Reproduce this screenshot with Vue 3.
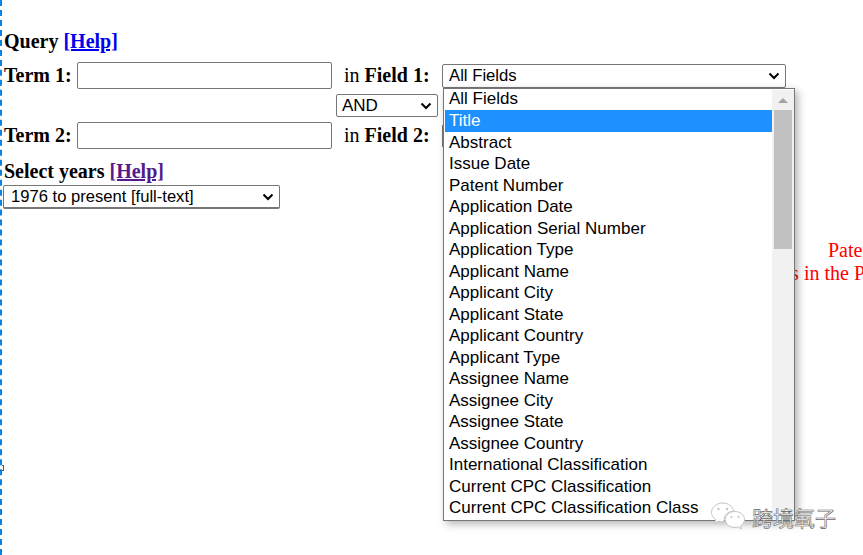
<script setup>
const fieldOptions = [
  'All Fields',
  'Title',
  'Abstract',
  'Issue Date',
  'Patent Number',
  'Application Date',
  'Application Serial Number',
  'Application Type',
  'Applicant Name',
  'Applicant City',
  'Applicant State',
  'Applicant Country',
  'Applicant Type',
  'Assignee Name',
  'Assignee City',
  'Assignee State',
  'Assignee Country',
  'International Classification',
  'Current CPC Classification',
  'Current CPC Classification Class'
]
</script>

<template>
  <div class="page">
    <form class="query" @submit.prevent>
      <h4 class="heading">Query <a class="help" href="#">[Help]</a></h4>

      <div class="terms">
        <label class="term-label">Term 1:</label>
        <input class="term-input" type="text" />
        <span class="field-label">in <b>Field 1:</b></span>
        <div class="field-wrap">
          <select class="field-select">
            <option>All Fields</option>
          </select>
          <div class="dropdown">
            <ul class="options">
              <li
                v-for="option in fieldOptions"
                :key="option"
                :class="{ active: option === 'Title' }"
              >
                {{ option }}
              </li>
            </ul>
            <div class="scrollbar">
              <span class="arrow"></span>
              <span class="thumb"></span>
            </div>
          </div>
        </div>

        <select class="op-select">
          <option>AND</option>
        </select>

        <label class="term-label term-label-2">Term 2:</label>
        <input class="term-input term-input-2" type="text" />
        <span class="field-label">in <b>Field 2:</b></span>
        <select class="field-select field-select-2">
          <option>All Fields</option>
        </select>
      </div>

      <h4 class="heading years-heading">Select years <a class="help visited" href="#">[Help]</a></h4>
      <select class="years-select">
        <option>1976 to present [full-text]</option>
      </select>
    </form>

    <div class="notice">
      <p>Patents</p>
      <p class="notice-second">Results in the Patent</p>
    </div>

    <span class="resize-handle"></span>

    <div class="watermark">
      <svg width="36" height="30" viewBox="0 0 36 30" fill="#fff" stroke="#c4c4c4" stroke-width="1">
        <path d="M13 2C6.5 2 1.5 6.2 1.5 11.4c0 3 1.7 5.600 4.300 7.300L4.700 22.300l4.100-2.200c1.200.4 2.500.6 3.800.6 .5 0 1 0 1.400-.1C13.500 14 18 10 24 10.300 22.800 5.500 18.400 2 13 2z" />
        <path d="M34.500 18.500c0-4.500-4.300-8-9.600-8s-9.600 3.500-9.600 8 4.300 8 9.600 8c1.100 0 2.200-.2 3.200-.5l3.300 1.900-.9-3c2.600-1.500 4-3.800 4-6.400z" />
        <g fill="#c4c4c4" stroke="none">
          <circle cx="8.500" cy="8" r="1.200" />
          <circle cx="17" cy="8" r="1.200" />
          <circle cx="21.500" cy="16" r="1" />
          <circle cx="28.500" cy="16" r="1" />
        </g>
      </svg>
      <span class="watermark-text">跨境氧子</span>
    </div>
  </div>
</template>

<style>
html,
body {
  margin: 0;
  height: 100%;
  overflow: hidden;
  background: #fff;
}
</style>

<style scoped>
.page {
  position: relative;
  box-sizing: border-box;
  width: 863px;
  height: 555px;
  overflow: hidden;
  padding: 30px 0 0 4px;
  border-left: 2px dashed #0a84e0;
  font-family: "Liberation Serif", serif;
  font-size: 20px;
  color: #000;
}

.query {
  margin-left: -2px;
}

.heading {
  margin: 0;
  font-size: 20px;
  line-height: 23px;
  font-weight: bold;
}

.help {
  color: #0000ee;
  text-decoration: underline;
}

.help.visited {
  color: #551a8b;
}

.terms {
  display: grid;
  grid-template-columns: 73px 255px 110px 344px;
  grid-template-rows: 27px 33px 27px;
  margin-top: 9px;
  align-items: center;
}

.term-label {
  padding-top: 2px;
  font-weight: bold;
  align-self: start;
}

.term-label-2 {
  grid-column: 1;
}

.term-input {
  box-sizing: border-box;
  width: 255px;
  height: 27px;
  margin: 0;
  padding: 1px 2px;
  border: 1px solid #767676;
  border-radius: 2px;
  background: #fff;
}

.field-label {
  padding: 2px 0 0 12px;
  align-self: start;
}

.field-wrap {
  position: relative;
  display: flex;
  align-items: center;
  align-self: stretch;
}

.field-select,
.op-select,
.years-select {
  box-sizing: border-box;
  margin: 0;
  appearance: none;
  font-family: "Liberation Sans", Arial, sans-serif;
  color: #000;
  background-color: #fff;
  background-image: url("data:image/svg+xml,%3Csvg xmlns='http://www.w3.org/2000/svg' width='12' height='8' viewBox='0 0 12 8'%3E%3Cpath d='M1.500 1.500 6 6l4.500-4.500' fill='none' stroke='%23000' stroke-width='2'/%3E%3C/svg%3E");
  background-repeat: no-repeat;
  background-position: right 5px center;
  border: 1px solid #767676;
  border-radius: 2px;
}

.field-select {
  width: 344px;
  height: 24px;
  padding: 0 20px 0 6px;
  font-size: 16.7px;
}

.op-select {
  grid-column: 3;
  width: 102px;
  height: 23px;
  margin-left: 4px;
  padding: 0 20px 0 5px;
  font-size: 17px;
}

.years-select {
  display: block;
  width: 277px;
  height: 24px;
  margin: 2px 0 0 -1px;
  padding: 0 20px 0 7px;
  font-size: 16.6px;
  border-bottom-width: 2px;
}

.years-heading {
  margin-top: 11px;
}

.dropdown {
  position: absolute;
  top: 26px;
  left: 1px;
  display: flex;
  box-sizing: border-box;
  width: 352px;
  height: 433px;
  padding: 1px 0 1px 1px;
  background: #fff;
  border: 1px solid #767676;
  box-shadow: 3px 3px 8px rgba(0, 0, 0, 0.3);
  font-family: "Liberation Sans", Arial, sans-serif;
  font-size: 17px;
  z-index: 2;
}

.options {
  flex: 1;
  min-width: 0;
  margin: -2px 0 0;
  padding: 0;
  list-style: none;
}

.options li {
  height: 21.5px;
  line-height: 21px;
  padding-left: 4px;
  white-space: nowrap;
}

.options li:first-child {
  height: 22px;
  line-height: 22px;
}

.options li.active {
  background: #1e90ff;
  color: #fff;
}

.scrollbar {
  display: flex;
  flex-direction: column;
  align-items: center;
  flex: none;
  width: 22px;
  background: #f1f1f1;
}

.arrow {
  width: 0;
  height: 0;
  margin: 8px 0 7px;
  border: 5px solid transparent;
  border-top: 0;
  border-bottom: 5px solid #a3a3a3;
}

.thumb {
  width: 18px;
  height: 139px;
  background: #c1c1c1;
}

.notice {
  margin: 30px 0 0;
  color: #ff0000;
  font-size: 20px;
  line-height: 23px;
  white-space: nowrap;
}

.notice p {
  margin: 0;
  padding-left: 822px;
}

.notice .notice-second {
  padding-left: 734px;
}

.resize-handle {
  position: absolute;
  top: 465px;
  left: -2px;
  box-sizing: border-box;
  width: 4px;
  height: 6px;
  background: #fff;
  border: 1px solid #555;
}

.watermark {
  position: absolute;
  top: 501px;
  left: 708px;
  z-index: 3;
  display: flex;
  align-items: center;
  gap: 6px;
}

.watermark-text {
  font-family: "Noto Sans CJK SC", sans-serif;
  font-size: 21px;
  line-height: 28px;
  color: #fff;
  -webkit-text-stroke: 0.6px #666;
  transform: translateY(1px);
}
</style>
